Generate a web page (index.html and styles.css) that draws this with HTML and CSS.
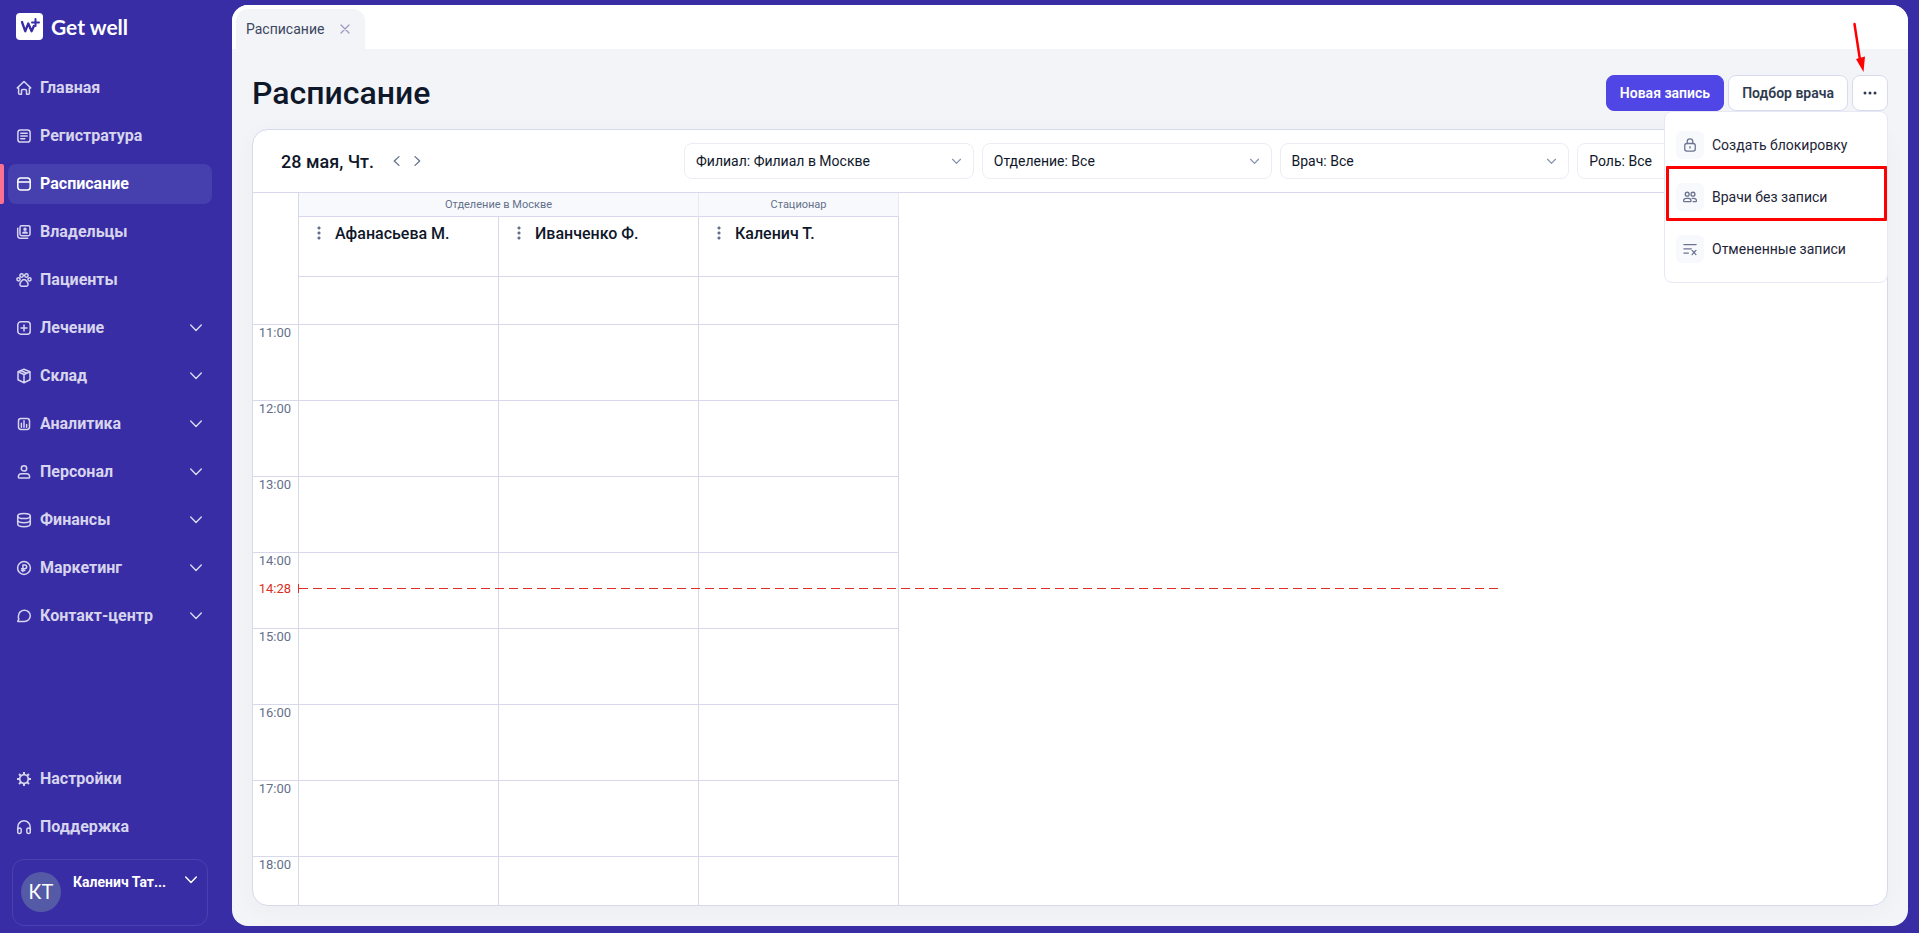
FILE: index.html
```
<!DOCTYPE html>
<html lang="ru">
<head>
  <meta charset="UTF-8">
  <title>Get well — Расписание</title>
  <meta name="viewport" content="width=device-width, initial-scale=1.0">
  <link rel="stylesheet" href="styles.css">
</head>
<body>

  <!-- Иконки -->
  <svg class="sprite" aria-hidden="true">
    <symbol id="i-home" viewBox="0 0 16 16"><path d="M2.6 7.9H1.300L8 1.500l6.700 6.400h-1.300v5.400a1 1 0 0 1-1 1h-1.900v-3.600a1.300 1.300 0 0 0-1.300-1.300H6.800a1.300 1.300 0 0 0-1.300 1.300v3.600H3.600a1 1 0 0 1-1-1z"/></symbol>
    <symbol id="i-list" viewBox="0 0 16 16"><rect x="1.900" y="1.900" width="12.200" height="12.200" rx="2.600"/><path d="M4.800 5.300h6.400M4.800 8h6.400M4.800 10.700h4"/></symbol>
    <symbol id="i-calendar" viewBox="0 0 16 16"><rect x="1.800" y="2" width="12.400" height="12" rx="3"/><path d="M1.800 5.900h12.400"/></symbol>
    <symbol id="i-owners" viewBox="0 0 16 16"><rect x="4" y="1.700" width="10" height="10" rx="1.600"/><path d="M1.700 4.200v7.400a2.600 2.600 0 0 0 2.600 2.600h7.400"/><circle cx="9" cy="5.200" r="1" fill="currentColor"/><path d="M6.800 9c.300-1.300 4.100-1.300 4.400 0z" fill="currentColor"/></symbol>
    <symbol id="i-paw" viewBox="0 0 16 16"><circle cx="5.600" cy="3.500" r="1.700"/><circle cx="10.400" cy="3.500" r="1.700"/><circle cx="2.500" cy="7.300" r="1.600"/><circle cx="13.500" cy="7.300" r="1.600"/><path d="M8 7.600c1.900 0 2.500 1.600 3.500 2.900 1.100 1.500.700 3.700-1.200 3.700H5.700c-1.900 0-2.300-2.200-1.200-3.700C5.500 9.200 6.100 7.600 8 7.600z"/></symbol>
    <symbol id="i-plus" viewBox="0 0 16 16"><rect x="1.800" y="1.800" width="12.400" height="12.400" rx="3"/><path d="M8 5v6M5 8h6"/></symbol>
    <symbol id="i-box" viewBox="0 0 16 16"><path d="M8 1.300l6 2.500v8L8 14.700l-6-2.900v-8zM2 3.900l6 2.600 6-2.600M8 6.500v8.200M4.900 2.700l6 2.600"/></symbol>
    <symbol id="i-chart" viewBox="0 0 16 16"><rect x="2.500" y="2.500" width="11" height="11" rx="2.400"/><path d="M5.400 7.200v4M8 4.800v6.400M10.600 8.600v2.600"/></symbol>
    <symbol id="i-user" viewBox="0 0 16 16"><circle cx="8" cy="4.400" r="2.700"/><path d="M5.400 9.800h5.200c2 0 3.300 1.600 3 3.600-.1.500-.4.700-.9.700H3.300c-.5 0-.8-.2-.9-.7-.3-2 1-3.600 3-3.600z"/></symbol>
    <symbol id="i-coins" viewBox="0 0 16 16"><ellipse cx="8" cy="4" rx="6.300" ry="2.600"/><path d="M1.700 4v8c0 1.500 2.800 2.700 6.300 2.700s6.300-1.200 6.300-2.700V4M1.700 8c0 1.500 2.800 2.700 6.300 2.700s6.300-1.200 6.300-2.700"/></symbol>
    <symbol id="i-ruble" viewBox="0 0 16 16"><circle cx="8" cy="8" r="6.400"/><path d="M6.900 11.600V4.900h1.900a1.900 1.900 0 0 1 0 3.800H5.500M5.500 10.400h3.300"/></symbol>
    <symbol id="i-chat" viewBox="0 0 16 16"><path d="M8.400 2.200c3.300 0 5.900 2.500 5.900 5.600s-2.600 5.600-5.900 5.600H1.800l1.100-2.600C1.900 9.900 2.500 7.800 2.500 7.800c0-3.100 2.600-5.600 5.900-5.600z"/></symbol>
    <symbol id="i-gear" viewBox="0 0 16 16"><circle cx="8" cy="8" r="4.300" stroke-width="1.700"/><path stroke-width="2" stroke-linecap="butt" d="M8 1v2.600M8 12.400V15M1 8h2.600M12.400 8H15M3 3l1.900 1.900M11.100 11.100L13 13M13 3l-1.900 1.900M4.900 11.100L3 13"/></symbol>
    <symbol id="i-phones" viewBox="0 0 16 16"><path d="M1.800 12V8a6.200 6.200 0 0 1 12.400 0v4M1.800 11.600a1.700 1.700 0 0 1 3.400-1.400v3a1.700 1.700 0 0 1-3.400-.7zM14.200 11.600a1.700 1.700 0 0 0-3.400-1.400v3a1.700 1.700 0 0 0 3.400-.7z"/></symbol>
    <symbol id="i-down" viewBox="0 0 12 12"><path d="M.7 3l5.300 5.500L11.300 3"/></symbol>
    <symbol id="i-lock" viewBox="0 0 16 16"><rect x="2" y="6.300" width="12" height="8.700" rx="2.400"/><path d="M4.800 6.300V4.200a3.200 3.200 0 0 1 6.400 0v2.100M8 9.800v1.700"/></symbol>
    <symbol id="i-people" viewBox="0 0 16 16"><circle cx="4.800" cy="4.800" r="2.200"/><circle cx="11.400" cy="4.800" r="2.200"/><path d="M3.700 9.600h2.400c2 0 3.100 1.100 3.100 2.700 0 .7-.3 1-.9 1H1.500c-.6 0-.9-.3-.9-1 0-1.600 1.100-2.700 3.100-2.700zM10.600 9.600h1.700c2 0 3.100 1.100 3.100 2.700 0 .7-.3 1-.9 1h-2.900"/></symbol>
    <symbol id="i-cancel" viewBox="0 0 16 16"><path d="M1 2.900h14M1 7.800h8.500M1 12.700h5.200M10.400 9.600l4.400 4.800M14.800 9.600l-4.400 4.800"/></symbol>
  </svg>

  <div class="app">
    <aside class="sidebar">
      <a class="logo" href="#">
        <svg class="logo-mark" viewBox="0 0 27 27" aria-hidden="true">
          <rect width="27" height="27" rx="4" fill="#fff"/>
          <path d="M6 9l3.200 9.200L12.300 10.500l3.300 7.700 2.300-5.200" fill="none" stroke="#382da5" stroke-width="2.300" stroke-linecap="round" stroke-linejoin="round"/>
          <path d="M19.500 6v7M16 9.500h7" stroke="#382da5" stroke-width="2"/>
        </svg>
        <span>Get well</span>
      </a>

      <nav class="menu">
        <a class="item" href="#"><svg class="icon"><use href="#i-home"/></svg>Главная</a>
        <a class="item" href="#"><svg class="icon"><use href="#i-list"/></svg>Регистратура</a>
        <a class="item active" href="#" aria-current="page"><svg class="icon"><use href="#i-calendar"/></svg>Расписание</a>
        <a class="item" href="#"><svg class="icon"><use href="#i-owners"/></svg>Владельцы</a>
        <a class="item" href="#"><svg class="icon"><use href="#i-paw"/></svg>Пациенты</a>
        <button class="item" type="button"><svg class="icon"><use href="#i-plus"/></svg>Лечение<svg class="arrow"><use href="#i-down"/></svg></button>
        <button class="item" type="button"><svg class="icon"><use href="#i-box"/></svg>Склад<svg class="arrow"><use href="#i-down"/></svg></button>
        <button class="item" type="button"><svg class="icon"><use href="#i-chart"/></svg>Аналитика<svg class="arrow"><use href="#i-down"/></svg></button>
        <button class="item" type="button"><svg class="icon"><use href="#i-user"/></svg>Персонал<svg class="arrow"><use href="#i-down"/></svg></button>
        <button class="item" type="button"><svg class="icon"><use href="#i-coins"/></svg>Финансы<svg class="arrow"><use href="#i-down"/></svg></button>
        <button class="item" type="button"><svg class="icon"><use href="#i-ruble"/></svg>Маркетинг<svg class="arrow"><use href="#i-down"/></svg></button>
        <button class="item" type="button"><svg class="icon"><use href="#i-chat"/></svg>Контакт-центр<svg class="arrow"><use href="#i-down"/></svg></button>
      </nav>

      <nav class="menu menu-bottom">
        <a class="item" href="#"><svg class="icon"><use href="#i-gear"/></svg>Настройки</a>
        <a class="item" href="#"><svg class="icon"><use href="#i-phones"/></svg>Поддержка</a>
      </nav>

      <button class="user" type="button">
        <span class="avatar">КТ</span>
        <span class="user-name">Каленич Тат...</span>
        <svg class="arrow"><use href="#i-down"/></svg>
      </button>
    </aside>

    <main class="main">
      <div class="tabs">
        <div class="tab">
          <a href="#">Расписание</a>
          <button class="tab-close" type="button" aria-label="Закрыть">
            <svg viewBox="0 0 10 10"><path d="M1 1l8 8M9 1L1 9"/></svg>
          </button>
        </div>
      </div>

      <div class="content">
        <header class="head">
          <h1>Расписание</h1>
          <div class="actions">
            <button class="btn primary" type="button">Новая запись</button>
            <button class="btn" type="button">Подбор врача</button>
            <div class="more">
              <button class="btn dots" type="button" aria-label="Ещё" aria-expanded="true">
                <svg viewBox="0 0 14 4"><circle cx="2" cy="2" r="1.500"/><circle cx="7" cy="2" r="1.500"/><circle cx="12" cy="2" r="1.500"/></svg>
              </button>
              <div class="dropdown">
                <button class="option" type="button"><span class="option-icon"><svg><use href="#i-lock"/></svg></span>Создать блокировку</button>
                <button class="option marked" type="button"><span class="option-icon"><svg><use href="#i-people"/></svg></span>Врачи без записи</button>
                <button class="option" type="button"><span class="option-icon"><svg><use href="#i-cancel"/></svg></span>Отмененные записи</button>
              </div>
              <svg class="pointer" viewBox="0 0 14 52" aria-hidden="true">
                <path d="M2.500 3l5.500 36" stroke="#f00" stroke-width="2.500"/>
                <path d="M4 38l9-2.500-1.500 15.500z" fill="#f00" stroke="none"/>
              </svg>
            </div>
          </div>
        </header>

        <section class="card">
          <div class="toolbar">
            <div class="date">
              <span class="date-text">28 мая, Чт.</span>
              <button class="step" type="button" aria-label="Предыдущий день"><svg viewBox="0 0 6 10"><path d="M5.500.6L.8 5l4.700 4.400"/></svg></button>
              <button class="step" type="button" aria-label="Следующий день"><svg viewBox="0 0 6 10"><path d="M.5.600L5.200 5 .5 9.400"/></svg></button>
            </div>
            <div class="filters">
              <div class="filter"><select aria-label="Филиал"><option>Филиал: Филиал в Москве</option></select><svg><use href="#i-down"/></svg></div>
              <div class="filter"><select aria-label="Отделение"><option>Отделение: Все</option></select><svg><use href="#i-down"/></svg></div>
              <div class="filter"><select aria-label="Врач"><option>Врач: Все</option></select><svg><use href="#i-down"/></svg></div>
              <div class="filter"><select aria-label="Роль"><option>Роль: Все</option></select><svg><use href="#i-down"/></svg></div>
            </div>
          </div>

          <div class="schedule">
            <table>
              <colgroup><col class="col-time"><col class="col-doctor"><col class="col-doctor"><col class="col-doctor"></colgroup>
              <thead>
                <tr class="groups">
                  <td rowspan="2"></td>
                  <th colspan="2" scope="colgroup">Отделение в Москве</th>
                  <th scope="colgroup">Стационар</th>
                </tr>
                <tr class="doctors">
                  <th scope="col"><button class="kebab" type="button" aria-label="Меню врача"></button>Афанасьева М.</th>
                  <th scope="col"><button class="kebab" type="button" aria-label="Меню врача"></button>Иванченко Ф.</th>
                  <th scope="col"><button class="kebab" type="button" aria-label="Меню врача"></button>Каленич Т.</th>
                </tr>
              </thead>
              <tbody>
                <tr class="short"><th></th><td></td><td></td><td></td></tr>
                <tr><th scope="row">11:00</th><td></td><td></td><td></td></tr>
                <tr><th scope="row">12:00</th><td></td><td></td><td></td></tr>
                <tr><th scope="row">13:00</th><td></td><td></td><td></td></tr>
                <tr><th scope="row">14:00</th><td></td><td></td><td></td></tr>
                <tr><th scope="row">15:00</th><td></td><td></td><td></td></tr>
                <tr><th scope="row">16:00</th><td></td><td></td><td></td></tr>
                <tr><th scope="row">17:00</th><td></td><td></td><td></td></tr>
                <tr><th scope="row">18:00</th><td></td><td></td><td></td></tr>
              </tbody>
            </table>
            <div class="now"><span class="now-time">14:28</span><span class="now-line"></span></div>
          </div>
        </section>
      </div>
    </main>
  </div>

</body>
</html>
```
FILE: styles.css
```
* {
  box-sizing: border-box;
}

body {
  margin: 0;
  font-family: Roboto, "Liberation Sans", sans-serif;
  font-size: 14px;
  color: #0f172a;
  background: #382da5;
}

button, select {
  font: inherit;
  color: inherit;
}

button {
  padding: 0;
  border: 0;
  background: none;
  cursor: pointer;
}

a {
  color: inherit;
  text-decoration: none;
}

svg {
  flex: none;
  fill: none;
  stroke: currentColor;
  stroke-width: 1.3;
  stroke-linecap: round;
  stroke-linejoin: round;
}

.sprite {
  position: absolute;
  width: 0;
  height: 0;
}

.app {
  display: flex;
  height: 100vh;
  overflow: hidden;
}

/* Боковое меню */
.sidebar {
  display: flex;
  flex-direction: column;
  flex: none;
  width: 232px;
  padding: 13px 0 7px;
}

.logo {
  display: flex;
  align-items: center;
  gap: 8px;
  height: 27px;
  margin: 0 16px 28px;
  font: bold 21px/27px Lato, sans-serif;
  color: #fff;
}

.logo-mark {
  width: 27px;
  height: 27px;
  stroke: none;
}

.menu {
  display: flex;
  flex-direction: column;
  gap: 8px;
  padding: 0 20px 0 8px;
}

.menu-bottom {
  margin-top: auto;
}

.item {
  display: flex;
  align-items: center;
  gap: 8px;
  height: 40px;
  padding: 0 10px 0 8px;
  border-radius: 8px;
  font-size: 16px;
  font-weight: 700;
  line-height: 20px;
  color: #d7d5ed;
}

.item.active {
  color: #fff;
  background: #463fae;
  position: relative;
}

.item.active::before {
  content: "";
  position: absolute;
  left: -8px;
  width: 4px;
  height: 100%;
  border-radius: 0 2px 2px 0;
  background: #fb7190;
}

.icon {
  width: 16px;
  height: 16px;
  stroke-width: 1.5;
}

.arrow {
  width: 12px;
  height: 12px;
  margin-left: auto;
  stroke-width: 1.5;
}

.user {
  display: flex;
  align-items: flex-start;
  height: 67px;
  margin: 12px 24px 0 12px;
  padding: 12px 10px 0 8px;
  border: 1px solid #4a42ae;
  border-radius: 12px;
  color: #fff;
}

.avatar {
  flex: none;
  width: 40px;
  height: 40px;
  margin-right: 12px;
  border-radius: 50%;
  font-size: 20px;
  line-height: 40px;
  text-align: center;
  background: #545aa6;
}

.user-name {
  font-weight: 700;
  line-height: 20px;
  white-space: nowrap;
}

.user .arrow {
  margin-top: 2px;
}

/* Рабочая область */
.main {
  display: flex;
  flex-direction: column;
  flex: 1;
  min-width: 0;
  margin: 5px 11px 7px 0;
  border-radius: 16px;
  overflow: hidden;
  background: #f3f4f8;
}

.tabs {
  display: flex;
  height: 44px;
  padding: 4px 4px 0;
  background: #fff;
}

.tab {
  display: flex;
  align-items: center;
  gap: 16px;
  padding: 0 15px 0 10px;
  border-radius: 12px 12px 0 0;
  color: #3b4660;
  background: #f3f4f8;
}

.tab-close {
  display: flex;
  color: #9a9cc4;
}

.tab-close svg {
  width: 10px;
  height: 10px;
}

.content {
  display: flex;
  flex-direction: column;
  flex: 1;
  min-height: 0;
  padding: 26px 20px 20px;
}

.head {
  display: flex;
  align-items: center;
  justify-content: space-between;
  height: 36px;
  margin-bottom: 18px;
}

h1 {
  margin: 0;
  font-size: 32px;
  font-weight: 500;
  line-height: 36px;
}

.actions {
  display: flex;
  gap: 4px;
}

.btn {
  height: 36px;
  padding: 0 13px;
  border: 1px solid #d9daee;
  border-radius: 8px;
  font-weight: 600;
  color: #2f3a50;
  background: #fff;
}

.btn.primary {
  border-color: #4f46e5;
  color: #fff;
  background: #4f46e5;
}

.more {
  position: relative;
}

.dots {
  display: flex;
  align-items: center;
  justify-content: center;
  width: 36px;
  padding: 0;
}

.dots svg {
  width: 14px;
  height: 4px;
  fill: currentColor;
  stroke: none;
}

.dropdown {
  position: absolute;
  top: 100%;
  right: 0;
  z-index: 2;
  width: 224px;
  padding: 7px 0;
  border: 1px solid #e7e8f3;
  border-radius: 8px;
  background: #fff;
}

.option {
  display: flex;
  align-items: center;
  gap: 8px;
  width: 100%;
  height: 52px;
  padding: 0 11px;
  color: #1e2438;
}

.option.marked {
  position: relative;
}

.option.marked::after {
  content: "";
  position: absolute;
  inset: -5px 0 2px 1px;
  border: 3px solid #f00;
  border-radius: 1px;
}

.option-icon {
  display: flex;
  align-items: center;
  justify-content: center;
  width: 28px;
  height: 28px;
  border-radius: 6px;
  color: #6b7590;
  background: #f8f9fd;
}

.option-icon svg {
  width: 14px;
  height: 14px;
  stroke-width: 1.5;
}

.pointer {
  position: absolute;
  right: 22px;
  bottom: 38px;
  z-index: 3;
  width: 14px;
  height: 52px;
}

.card {
  display: flex;
  flex-direction: column;
  flex: 1;
  min-height: 0;
  border: 1px solid #d7d8ec;
  border-radius: 16px;
  overflow: hidden;
  background: #fff;
  box-shadow: 0 4px 24px rgba(15, 23, 42, 0.03);
}

.toolbar {
  display: flex;
  flex: none;
  align-items: center;
  justify-content: space-between;
  height: 63px;
  padding: 0 20px 0 28px;
  border-bottom: 1px solid #d7d8ec;
}

.date {
  display: flex;
  align-items: center;
  gap: 14px;
}

.date-text {
  margin-right: 5px;
  font-size: 18px;
  font-weight: 500;
}

.step {
  display: flex;
  color: #64708a;
}

.step svg {
  width: 7px;
  height: 10px;
}

.filters {
  display: flex;
  flex: 0 1 1183px;
  gap: 8px;
}

.filter {
  display: flex;
  align-items: center;
  flex: 1;
}

.filter select {
  width: 100%;
  height: 36px;
  padding: 0 30px 0 11px;
  border: 1px solid #ececf6;
  border-radius: 8px;
  background: #fff;
  appearance: none;
}

.filter svg {
  width: 9px;
  height: 9px;
  margin-left: -22px;
  color: #8490aa;
  stroke-width: 1.5;
  pointer-events: none;
}

/* Сетка расписания */
.schedule {
  position: relative;
  flex: 1;
  min-height: 0;
  overflow: hidden;
}

table {
  width: 646px;
  border-spacing: 0;
  table-layout: fixed;
}

.col-time {
  width: 46px;
}

.col-doctor {
  width: 200px;
}

th, td {
  padding: 0;
  border-right: 1px solid #d7d8ec;
  border-bottom: 1px solid #d7d8ec;
  font-weight: 400;
}

.groups td {
  border-bottom: 0;
}

.groups th {
  height: 24px;
  border-right-color: #e7e8f3;
  font-size: 11px;
  color: #64708a;
  background: #f8f9fd;
}

.doctors th {
  height: 60px;
  padding: 7px 16px 0;
  font-size: 16px;
  font-weight: 500;
  line-height: 20px;
  text-align: left;
  vertical-align: top;
}

.kebab {
  width: 20px;
  height: 16px;
  vertical-align: -2px;
  background: radial-gradient(circle at 4px 3px, #64708a 1px, transparent 2px) 0 0 / 20px 5px repeat-y;
}

tbody tr {
  height: 76px;
}

tbody tr.short {
  height: 48px;
}

tbody th {
  padding: 1px 7px 0 0;
  font-size: 13px;
  line-height: 14px;
  text-align: right;
  vertical-align: top;
  color: #64708a;
}

.now {
  position: absolute;
  top: 388px;
  left: 0;
  display: flex;
  align-items: center;
  height: 14px;
  font-size: 13px;
  color: #dc2f26;
}

.now-time {
  width: 45px;
  padding-right: 7px;
  text-align: right;
}

.now-line {
  width: 1201px;
  height: 9px;
  border-left: 1px solid currentColor;
  background: repeating-linear-gradient(90deg, currentColor 0 9px, transparent 9px 14px) center / 100% 1px no-repeat;
}
```
